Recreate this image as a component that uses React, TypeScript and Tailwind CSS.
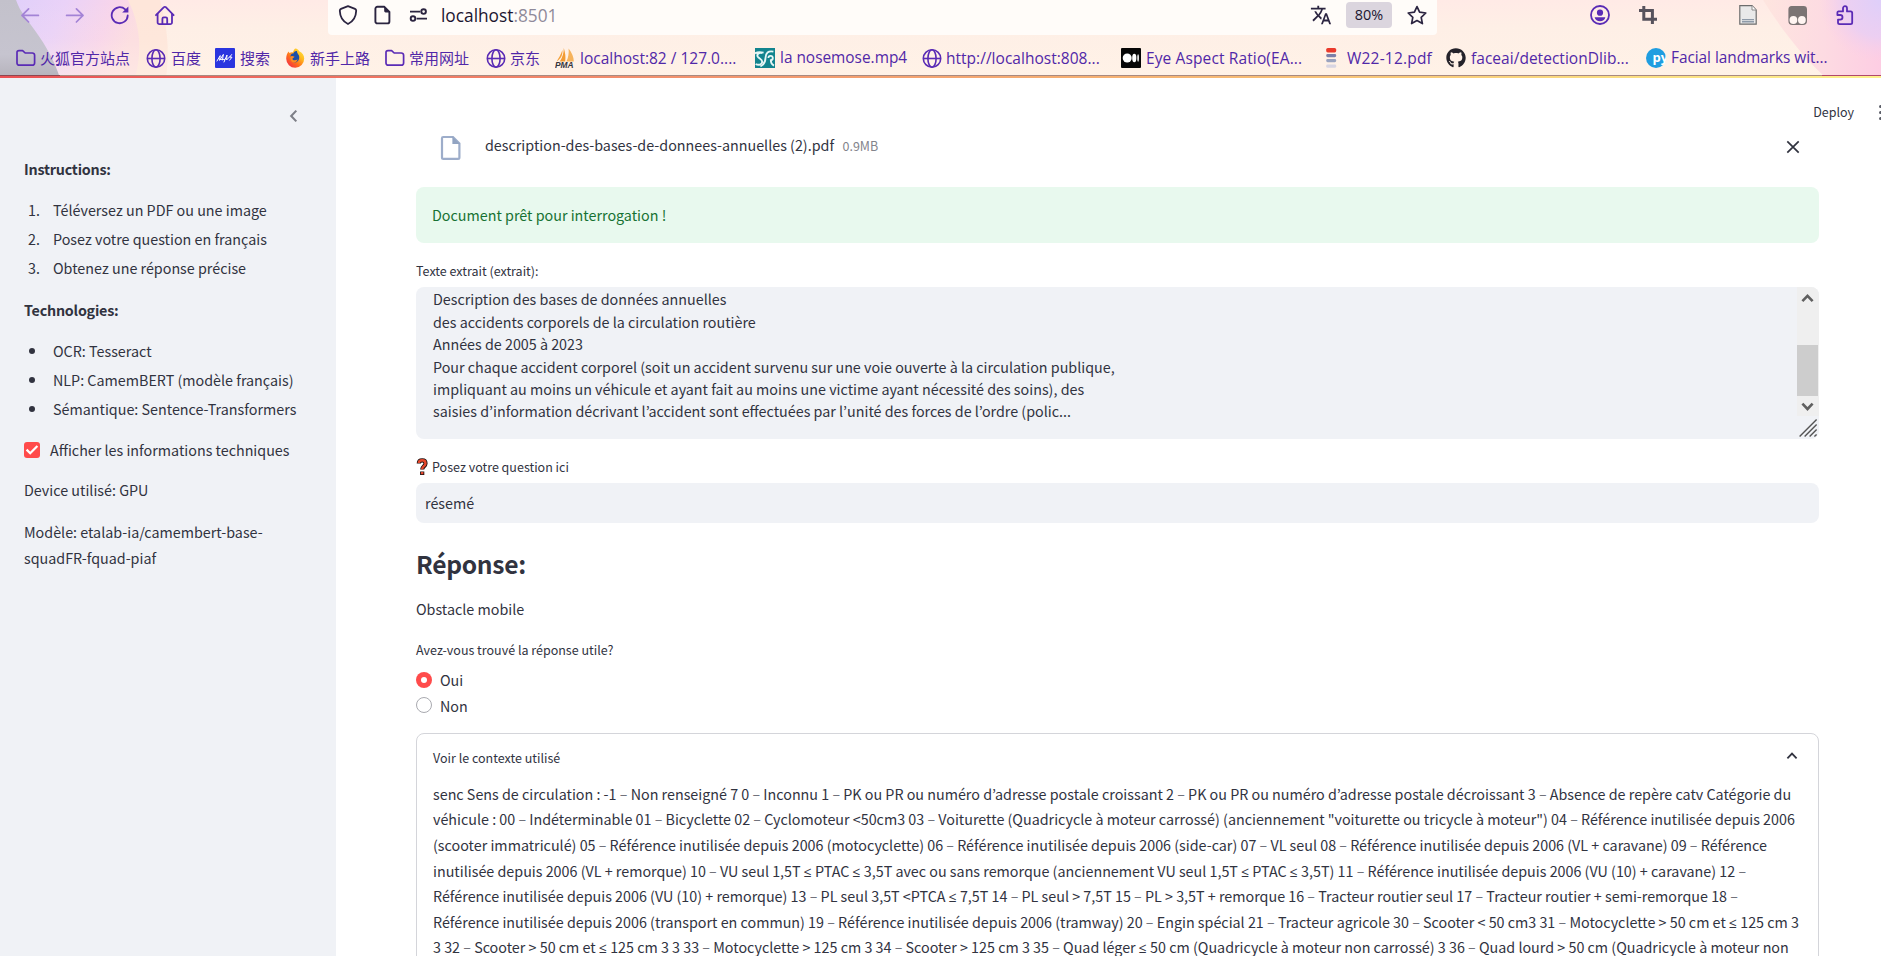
import React from "react";
import type { ReactNode } from "react";
import { FaGithub } from "react-icons/fa";
import { MdTranslate } from "react-icons/md";

const PURPLE = "#5a2bb5";
const INK = "#2b2440";

function ToolbarBackdrop() {
  return (
    <svg className="absolute inset-0" width="1881" height="78" viewBox="0 0 1881 78" aria-hidden="true">
      <defs>
        <linearGradient id="base" x1="0" y1="0" x2="0" y2="1">
          <stop offset="0" stopColor="#ffeae6" />
          <stop offset="0.35" stopColor="#feefe6" />
          <stop offset="1" stopColor="#fff2e7" />
        </linearGradient>
        <linearGradient id="lilac" x1="0" y1="0" x2="1" y2="0.25">
          <stop offset="0" stopColor="#decffa" />
          <stop offset="0.45" stopColor="#ead2f8" />
          <stop offset="0.8" stopColor="#f8d5ea" />
          <stop offset="1" stopColor="#fcdde0" />
        </linearGradient>
        <linearGradient id="fade" x1="0" y1="0" x2="0" y2="1">
          <stop offset="0" stopColor="#fff2e7" stopOpacity="0" />
          <stop offset="0.5" stopColor="#fff2e7" stopOpacity="0.08" />
          <stop offset="1" stopColor="#fff2e7" stopOpacity="0.5" />
        </linearGradient>
        <linearGradient id="slate" x1="0" y1="0" x2="0" y2="1">
          <stop offset="0" stopColor="#c3c1cb" />
          <stop offset="0.7" stopColor="#c6c4cf" />
          <stop offset="1" stopColor="#b5b2bb" />
        </linearGradient>
        <linearGradient id="rose" x1="0" y1="0" x2="1" y2="0">
          <stop offset="0" stopColor="#fee5df" />
          <stop offset="0.5" stopColor="#fddbe2" />
          <stop offset="1" stopColor="#fdcde3" />
        </linearGradient>
        <radialGradient id="violet" gradientUnits="userSpaceOnUse" cx="1881" cy="0" r="62">
          <stop offset="0" stopColor="#decffa" />
          <stop offset="0.6" stopColor="#e8cff5" stopOpacity="0.8" />
          <stop offset="1" stopColor="#f8cfea" stopOpacity="0" />
        </radialGradient>
        <linearGradient id="rule" x1="0" y1="0" x2="1" y2="0">
          <stop offset="0" stopColor="#ea5054" />
          <stop offset="0.15" stopColor="#ee6b5e" />
          <stop offset="0.35" stopColor="#f2906c" />
          <stop offset="0.65" stopColor="#f7b973" />
          <stop offset="0.85" stopColor="#fbdc80" />
          <stop offset="1" stopColor="#fdf08c" />
        </linearGradient>
      </defs>
      <rect width="1881" height="78" fill="url(#base)" />
      <path d="M0 0H160C167 26 170 50 166 78H0Z" fill="#fee6da" />
      <path d="M0 0H128C141 26 142 52 135 78H0Z" fill="url(#lilac)" />
      <rect width="170" height="78" fill="url(#fade)" />
      <path d="M0 0H16C20 12 28 20 36 32C46 46 54 60 60 78H0Z" fill="url(#slate)" />
      <path d="M1763 0H1881V78H1826C1802 56 1782 30 1763 0Z" fill="url(#rose)" />
      <rect x="1800" width="81" height="75" fill="url(#violet)" />
      <rect y="75" width="1881" height="1" fill="#a98a80" />
      <rect y="75" width="60" height="1" fill="#8e4650" />
      <rect x="1822" y="75" width="59" height="1" fill="#b0486c" />
      <rect y="76" width="1881" height="2" fill="url(#rule)" />
    </svg>
  );
}

function FolderIcon() {
  return (
    <svg width="20" height="20" viewBox="0 0 20 20" fill="none" stroke={PURPLE} strokeWidth="1.7" strokeLinejoin="round">
      <path d="M1 4.6A2 2 0 0 1 3 2.6H6.6L9.2 5H16.4A2.2 2.2 0 0 1 18.6 7.2V15A2.2 2.2 0 0 1 16.4 17.2H3.2A2.2 2.2 0 0 1 1 15Z" />
    </svg>
  );
}

function GlobeIcon() {
  return (
    <svg width="20" height="20" viewBox="0 0 20 20" fill="none" stroke={PURPLE} strokeWidth="1.6">
      <circle cx="10" cy="10.5" r="8.7" />
      <ellipse cx="10" cy="10.5" rx="4.1" ry="8.7" />
      <path d="M1.3 10.5H18.7" />
    </svg>
  );
}

function SearchSiteIcon() {
  return (
    <svg width="20" height="20" viewBox="0 0 20 20">
      <rect width="20" height="20" rx="1" fill="#2a35df" />
      <path d="M2 13L5.2 7.6L4.6 12.4L8.4 6.4L7.4 12M5 11.4H9.6M9 14L12 7L11.6 12L14.8 8.6M16.6 6.6L14.6 9.2H17L14.6 12.2" fill="none" stroke="#fff" strokeWidth="1" strokeLinecap="round" />
    </svg>
  );
}

function FirefoxIcon() {
  return (
    <svg width="20" height="20" viewBox="0 0 20 20">
      <defs>
        <linearGradient id="ff" x1="1" y1="0" x2="0.1" y2="1">
          <stop offset="0" stopColor="#fff04a" />
          <stop offset="0.35" stopColor="#ffbb1f" />
          <stop offset="0.65" stopColor="#ff6a1c" />
          <stop offset="1" stopColor="#f0254f" />
        </linearGradient>
      </defs>
      <path d="M10.2 0.6C12.4 0.8 13.6 2 14.2 3.2C17.4 4.6 19.2 7.2 19.2 10.6A9 9 0 0 1 1.2 10.8C1.2 7.6 2 5.4 3.6 3.4L4.4 5C5.8 4.2 7 4.2 8 4.4C8.4 2.8 9 1.6 10.2 0.6Z" fill="url(#ff)" />
      <path d="M5.4 8.2C6 5.8 7.4 5.4 8.4 5.6C9 3.6 11 2.8 12 3.2C11.8 4.6 13 5.6 13.8 7.2C15 9.8 13.8 14.2 10 14.4C7 14.4 5.2 12 5.4 8.2Z" fill="#1b4fa8" />
      <path d="M5.2 8.6C6.6 7.6 8 8 9.6 8.8C8.6 10.2 7.4 10 7.4 11C8 12.8 11 12.6 12.6 11.2C12 14 9.6 15.2 7.6 14.2C5.6 13.2 4.8 11 5.2 8.6Z" fill="#ff8a1e" />
    </svg>
  );
}

function PmaIcon() {
  return (
    <svg width="20" height="22" viewBox="0 0 20 22">
      <path d="M7.4 3C7.8 8 6 12 1.6 14.4C3.8 11 5.8 7.6 7.4 3Z" fill="#f5a13a" />
      <path d="M8.8 1C10.4 6 10.8 10.4 10.2 14.4H4.8C7.6 10.4 8.8 6 8.8 1Z" fill="#f29b33" />
      <path d="M13.6 1.4C17 5.8 18.8 10 18.8 14.4H11.4C13.4 10.4 14 6 13.6 1.4Z" fill="#f6b35c" />
      <text x="0" y="21" fontSize="8.4" fontWeight="700" fontStyle="italic" fontFamily="Liberation Sans" fill="#35353d">PMA</text>
    </svg>
  );
}

function WaveSiteIcon() {
  return (
    <svg width="20" height="20" viewBox="0 0 20 20">
      <rect width="20" height="20" fill="#12848e" />
      <path d="M0 5.4C2.4 3.6 5 4 8.6 4.6M7 5C3.4 4.4 1.8 6.4 2.6 8.4C3.6 10.6 7.4 11 7.2 14C7 16.8 3.4 17.4 0.6 16" fill="none" stroke="#e6f6f5" strokeWidth="1.9" />
      <path d="M18.4 3.6C13 2.4 10.8 5.4 10.6 9.4C10.4 14 8.6 17 5.4 18.4M13.4 10A2.2 2.2 0 1 1 15.8 12.2C15.8 15 17 16.6 19 17.6" fill="none" stroke="#e6f6f5" strokeWidth="1.8" />
    </svg>
  );
}

function MediumIcon() {
  return (
    <svg width="20" height="20" viewBox="0 0 20 20">
      <rect width="20" height="20" rx="1" fill="#060606" />
      <circle cx="6.2" cy="10" r="4.5" fill="#fff" />
      <ellipse cx="13.3" cy="10" rx="2.1" ry="4.2" fill="#fff" />
      <ellipse cx="17.1" cy="10" rx="0.8" ry="3.7" fill="#fff" />
    </svg>
  );
}

function StackIcon() {
  return (
    <svg width="11" height="20" viewBox="0 0 11 20">
      <rect x="0.2" y="0" width="10" height="4.4" rx="1.6" fill="#ea3a2c" />
      <rect x="0.2" y="6" width="10" height="3.2" rx="1.4" fill="#7b7fa8" />
      <rect x="0.2" y="11" width="10" height="3.2" rx="1.4" fill="#9aa3bf" />
      <rect x="0.2" y="16.4" width="10" height="3.4" rx="1.4" fill="#d8d5e2" />
    </svg>
  );
}

function PyIcon() {
  return (
    <svg width="20" height="20" viewBox="0 0 20 20">
      <circle cx="10" cy="10" r="10" fill="#1f9de0" />
      <text x="6.6" y="14.2" fontSize="13" fontWeight="700" fontFamily="Open Sans" fill="#fff">py</text>
    </svg>
  );
}

type Bookmark = { icon: ReactNode; label: string; slot: string; gap: string; text: string };

const bookmarks: Bookmark[] = [
  { icon: <FolderIcon />, label: "火狐官方站点", slot: "w-[130px]", gap: "gap-[4px]", text: "text-[15px]" },
  { icon: <GlobeIcon />, label: "百度", slot: "w-[69px]", gap: "gap-[5px]", text: "text-[15px]" },
  { icon: <SearchSiteIcon />, label: "搜索", slot: "w-[70px]", gap: "gap-[5px]", text: "text-[15px]" },
  { icon: <FirefoxIcon />, label: "新手上路", slot: "w-[100px]", gap: "gap-[5px]", text: "text-[15px]" },
  { icon: <FolderIcon />, label: "常用网址", slot: "w-[101px]", gap: "gap-[4px]", text: "text-[15px]" },
  { icon: <GlobeIcon />, label: "京东", slot: "w-[69px]", gap: "gap-[4px]", text: "text-[15px]" },
  { icon: <PmaIcon />, label: "localhost:82 / 127.0....", slot: "w-[200px]", gap: "gap-[5px]", text: "text-[15.5px]" },
  { icon: <WaveSiteIcon />, label: "la nosemose.mp4", slot: "w-[167px]", gap: "gap-[5px]", text: "text-[15.4px]" },
  { icon: <GlobeIcon />, label: "http://localhost:808...", slot: "w-[199px]", gap: "gap-[4px]", text: "text-[15.5px] tracking-[0.02px]" },
  { icon: <MediumIcon />, label: "Eye Aspect Ratio(EA...", slot: "w-[205px]", gap: "gap-[5px]", text: "text-[15.5px] tracking-[0.12px]" },
  { icon: <StackIcon />, label: "W22-12.pdf", slot: "w-[120px]", gap: "gap-[10px]", text: "text-[15.5px] tracking-[0.2px]" },
  { icon: <FaGithub size={20} color="#24222a" />, label: "faceai/detectionDlib...", slot: "w-[200px]", gap: "gap-[5px]", text: "text-[15.5px] tracking-[0.03px]" },
  { icon: <PyIcon />, label: "Facial landmarks wit...", slot: "w-[190px]", gap: "gap-[5px]", text: "text-[15.4px] tracking-[-0.04px]" },
];

function BrowserChrome() {
  return (
    <header className="relative h-[78px] shrink-0 overflow-hidden font-['Open_Sans','Noto_Sans_CJK_SC',sans-serif]">
      <ToolbarBackdrop />
      <div className="relative flex h-[35px]">
        <div className="flex w-[328px] items-start pl-[20px]">
          <svg className="mt-[5px]" width="20" height="20" viewBox="0 0 20 20" fill="none" stroke="#a383d6" strokeWidth="1.7" strokeLinecap="round" strokeLinejoin="round">
            <path d="M18.4 10.4H2M8.6 3.8L2 10.4L8.6 17" />
          </svg>
          <svg className="ml-[25px] mt-[5px]" width="20" height="20" viewBox="0 0 20 20" fill="none" stroke="#a383d6" strokeWidth="1.7" strokeLinecap="round" strokeLinejoin="round">
            <path d="M1.6 10.4H18M11.4 3.8L18 10.4L11.4 17" />
          </svg>
          <svg className="ml-[25px] mt-[5px]" width="20" height="20" viewBox="0 0 20 20" fill="none" stroke={PURPLE} strokeWidth="1.8" strokeLinecap="round">
            <path d="M17.7 10.4A8 8 0 1 1 15.2 4.4" />
            <path d="M18.4 1.4V7.6H12.2Z" fill={PURPLE} stroke="none" />
          </svg>
          <svg className="ml-[25px] mt-[5px]" width="20" height="21" viewBox="0 0 20 21" fill="none" stroke={PURPLE} strokeWidth="1.8" strokeLinejoin="round" strokeLinecap="round">
            <path d="M1 10.2L8.9 2.2A1.3 1.3 0 0 1 10.8 2.2L18.6 10.2" />
            <path d="M2.6 8.8V17.4A1.8 1.8 0 0 0 4.4 19.2H15.2A1.8 1.8 0 0 0 17 17.4V8.8" />
            <path d="M7.4 19V13.8A1.4 1.4 0 0 1 8.8 12.4H10.8A1.4 1.4 0 0 1 12.2 13.8V19" />
          </svg>
        </div>
        <div className="flex w-[1109px] items-start rounded-b-[4px] bg-[#fffcf9] pl-[10px]">
          <svg className="mt-[5px]" width="20" height="20" viewBox="0 0 20 20" fill="none" stroke={INK} strokeWidth="1.8" strokeLinejoin="round">
            <path d="M10 1.2L17 3.8C18 4.2 18.2 4.8 18.2 5.8C18 12 15.6 16.4 10 19C4.4 16.4 2 12 1.8 5.8C1.8 4.8 2 4.2 3 3.8Z" />
          </svg>
          <svg className="ml-[16px] mt-[5px]" width="18" height="20" viewBox="0 0 18 20" fill="none" stroke={INK} strokeWidth="1.9" strokeLinejoin="round">
            <path d="M3.4 1.8H10.4L15.4 6.8V16.4A2 2 0 0 1 13.4 18.4H3.4A2 2 0 0 1 1.4 16.4V3.8A2 2 0 0 1 3.4 1.8Z" />
            <path d="M10.2 1.6L15.8 7.4H11.6A1.4 1.4 0 0 1 10.2 6Z" fill={INK} stroke="none" />
          </svg>
          <svg className="ml-[17px] mt-[5px]" width="20" height="20" viewBox="0 0 20 20" fill="none" stroke={INK} strokeWidth="1.9">
            <path d="M1 6.6H11.2M7.6 13.6H18" />
            <circle cx="14.6" cy="6.6" r="2.3" />
            <circle cx="4" cy="13.6" r="2.3" />
          </svg>
          <span className="ml-[12px] mt-[3px] w-[860px] text-[17.3px] leading-[26px] text-[#1c1630]">
            localhost<span className="text-[#8f8a9a]">:8501</span>
          </span>
          <MdTranslate className="ml-[9px] mt-[4px]" size={22} color={INK} />
          <span className="ml-[14px] mt-[2px] flex h-[26px] w-[46px] items-center justify-center rounded-[4px] bg-[#dbd5de] text-[14.4px] text-[#1c1630]">80%</span>
          <svg className="ml-[15px] mt-[5px]" width="20" height="21" viewBox="0 0 20 21" fill="none" stroke={INK} strokeWidth="1.7" strokeLinejoin="round">
            <path d="M10 1.6L12.6 7.2L18.8 8L14.2 12.3L15.4 18.6L10 15.5L4.6 18.6L5.8 12.3L1.2 8L7.4 7.2Z" />
          </svg>
        </div>
        <div className="flex items-start pl-[153px]">
          <svg className="mt-[5px]" width="20" height="20" viewBox="0 0 20 20">
            <circle cx="10" cy="10" r="9" fill="none" stroke={PURPLE} strokeWidth="1.8" />
            <circle cx="10" cy="7.7" r="3.1" fill={PURPLE} />
            <path d="M4.6 12.2H15.4C14.8 14.8 12.6 16.2 10 16.2C7.4 16.2 5.2 14.8 4.6 12.2Z" fill={PURPLE} />
          </svg>
          <svg className="ml-[29px] mt-[6px]" width="18" height="18" viewBox="0 0 18 18" fill="none" stroke="#56525c" strokeWidth="3">
            <path d="M4.8 0V13.2H18M0 4.6H13.4V18" />
          </svg>
          <svg className="ml-[82px] mt-[5px]" width="18" height="20" viewBox="0 0 18 20">
            <path d="M0.8 0.6H13L17.2 5V19.2H0.8Z" fill="#e9e9e9" stroke="#6d6d6d" strokeWidth="1.2" />
            <path d="M13 0.8V5H17" fill="#fff" stroke="#8a8a8a" />
            <path d="M3 14.6H15M3 16.8H15" stroke="#8e9aa8" strokeWidth="1.4" />
          </svg>
          <svg className="ml-[31px] mt-[5px]" width="20" height="21" viewBox="0 0 20 21">
            <path d="M3.6 1H15.6A3.4 3.4 0 0 1 19 4.4V16A4 4 0 0 1 15 20H4.4A4 4 0 0 1 0.4 16V4.4A3.4 3.4 0 0 1 3.6 1Z" fill="#7b7474" />
            <circle cx="5.4" cy="15" r="3.9" fill="#fff5f2" />
            <circle cx="13.9" cy="15" r="3.9" fill="#fff5f2" />
          </svg>
          <svg className="ml-[28px] mt-[5px]" width="20" height="21" viewBox="0 0 20 21" fill="none" stroke={PURPLE} strokeWidth="1.8" strokeLinejoin="round">
            <path d="M2.4 6.4H7V3.2A2 2 0 0 1 11 3.2V6.4H14.6A1.6 1.6 0 0 1 16.2 8V17.6A1.6 1.6 0 0 1 14.6 19.2H3.6A1.6 1.6 0 0 1 2 17.6V14.6H4.2A2.2 2.2 0 0 0 4.2 10H1.4V7.6A1.2 1.2 0 0 1 2.4 6.4Z" />
          </svg>
        </div>
      </div>
      <nav className="relative flex h-[40px] items-center pl-[16px] pt-[6px] leading-[24px] text-[#5128a8]">
        {bookmarks.map((b) => (
          <div key={b.label} className={`flex shrink-0 items-center whitespace-nowrap ${b.slot} ${b.gap}`}>
            <span className="shrink-0">{b.icon}</span>
            <span className={b.text}>{b.label}</span>
          </div>
        ))}
      </nav>
    </header>
  );
}

function Sidebar() {
  return (
    <aside className="h-full w-[336px] shrink-0 bg-[#f0f2f6] pl-[24px] leading-[26px]">
      <div className="flex h-[78px] items-center pl-[264px]">
        <svg className="mb-[2px]" width="12" height="14" viewBox="0 0 12 14" fill="none" stroke="#7d7f87" strokeWidth="2.1">
          <path d="M8.3 1.6L3.2 7L8.3 12.4" />
        </svg>
      </div>
      <p className="font-bold tracking-[-0.22px]">Instructions:</p>
      <ol className="mt-[13px] leading-[29px]">
        {["Téléversez un PDF ou une image", "Posez votre question en français", "Obtenez une réponse précise"].map((t, i) => (
          <li key={t} className="flex">
            <span className="w-[29px] pl-[4px]">{i + 1}.</span>
            {t}
          </li>
        ))}
      </ol>
      <p className="mt-[15px] font-bold tracking-[-0.22px]">Technologies:</p>
      <ul className="mt-[13px] leading-[29px]">
        {["OCR: Tesseract", "NLP: CamemBERT (modèle français)", "Sémantique: Sentence-Transformers"].map((t) => (
          <li key={t} className="flex items-center">
            <span className="ml-[5px] mr-[18px] size-[6px] rounded-full bg-[#31333f]" />
            {t}
          </li>
        ))}
      </ul>
      <label className="mt-[14px] flex items-center gap-[10px]">
        <span className="flex size-[16px] items-center justify-center rounded-[3px] bg-[#ff4b4b]">
          <svg width="14" height="12" viewBox="0 0 14 12" fill="none" stroke="#fff" strokeWidth="2.3">
            <path d="M1.6 5.6L5.2 9.2L12.4 2" />
          </svg>
        </span>
        Afficher les informations techniques
      </label>
      <p className="mt-[14px]">Device utilisé: GPU</p>
      <p className="mt-[16px]">
        Modèle: etalab-ia/camembert-base-
        <br />
        squadFR-fquad-piaf
      </p>
    </aside>
  );
}

const extract = [
  "Description des bases de données annuelles",
  "des accidents corporels de la circulation routière",
  "Années de 2005 à 2023",
  "Pour chaque accident corporel (soit un accident survenu sur une voie ouverte à la circulation publique,",
  "impliquant au moins un véhicule et ayant fait au moins une victime ayant nécessité des soins), des",
  "saisies d’information décrivant l’accident sont effectuées par l’unité des forces de l’ordre (polic...",
];

const context = [
  "senc Sens de circulation : -1 – Non renseigné 7 0 – Inconnu 1 – PK ou PR ou numéro d’adresse postale croissant 2 – PK ou PR ou numéro d’adresse postale décroissant 3 – Absence de repère catv Catégorie du",
  'véhicule : 00 – Indéterminable 01 – Bicyclette 02 – Cyclomoteur <50cm3 03 – Voiturette (Quadricycle à moteur carrossé) (anciennement "voiturette ou tricycle à moteur") 04 – Référence inutilisée depuis 2006',
  "(scooter immatriculé) 05 – Référence inutilisée depuis 2006 (motocyclette) 06 – Référence inutilisée depuis 2006 (side-car) 07 – VL seul 08 – Référence inutilisée depuis 2006 (VL + caravane) 09 – Référence",
  "inutilisée depuis 2006 (VL + remorque) 10 – VU seul 1,5T ≤ PTAC ≤ 3,5T avec ou sans remorque (anciennement VU seul 1,5T ≤ PTAC ≤ 3,5T) 11 – Référence inutilisée depuis 2006 (VU (10) + caravane) 12 –",
  "Référence inutilisée depuis 2006 (VU (10) + remorque) 13 – PL seul 3,5T <PTCA ≤ 7,5T 14 – PL seul > 7,5T 15 – PL > 3,5T + remorque 16 – Tracteur routier seul 17 – Tracteur routier + semi-remorque 18 –",
  "Référence inutilisée depuis 2006 (transport en commun) 19 – Référence inutilisée depuis 2006 (tramway) 20 – Engin spécial 21 – Tracteur agricole 30 – Scooter < 50 cm3 31 – Motocyclette > 50 cm et ≤ 125 cm 3",
  "3 32 – Scooter > 50 cm et ≤ 125 cm 3 3 33 – Motocyclette > 125 cm 3 34 – Scooter > 125 cm 3 35 – Quad léger ≤ 50 cm (Quadricycle à moteur non carrossé) 3 36 – Quad lourd > 50 cm (Quadricycle à moteur non",
];

function ContextLine({ text }: { text: string }) {
  return (
    <p className="h-[25.6px] whitespace-nowrap">
      {text.split(/([≤–])/).map((part, i) =>
        part === "≤" ? (
          <span key={i} className="font-['Open_Sans'] text-[14px] leading-none">≤</span>
        ) : part === "–" ? (
          <span key={i} className="text-[#31333f]/75">–</span>
        ) : (
          part
        ),
      )}
    </p>
  );
}

function ExtractBox() {
  return (
    <div className="flex h-[152px] justify-between overflow-hidden rounded-[8px] bg-[#f0f2f6] pl-[17px]">
      <div className="whitespace-nowrap pt-[1.4px] leading-[22.4px]">
        {extract.map((line) => (
          <p key={line}>{line}</p>
        ))}
      </div>
      <div className="flex w-[22px] flex-col">
        <div className="flex h-[129px] flex-col items-center bg-[#efefef] pr-px">
          <svg className="mt-[6px]" width="13" height="10" viewBox="0 0 13 10" fill="none" stroke="#606060" strokeWidth="2.6">
            <path d="M1.4 8.2L6.5 2.8L11.6 8.2" />
          </svg>
          <span className="mt-[42px] h-[51px] w-[21px] shrink-0 bg-[#cdcdcd]" />
          <svg className="mt-[6px]" width="13" height="10" viewBox="0 0 13 10" fill="none" stroke="#606060" strokeWidth="2.6">
            <path d="M1.4 1.6L6.5 7L11.6 1.6" />
          </svg>
        </div>
        <svg className="ml-[2px] mt-[2px]" width="19" height="20" viewBox="0 0 19 20" fill="none" stroke="#555" strokeWidth="1.4">
          <path d="M0.6 18.6L17.6 1.4M5.6 18.6L17.6 6.6M10.6 18.6L17.6 11.6M15.4 18.6L17.6 16.4" />
        </svg>
      </div>
    </div>
  );
}

function Radio({ label, checked }: { label: string; checked?: boolean }) {
  return (
    <label className="flex h-[26px] items-center gap-[8px]">
      {checked ? (
        <span className="flex size-[16px] items-center justify-center rounded-full bg-[#ff4b4b]">
          <span className="size-[6px] rounded-full bg-white" />
        </span>
      ) : (
        <span className="mb-[2px] size-[16px] rounded-full border border-[#a9aab0] bg-white" />
      )}
      {label}
    </label>
  );
}

function Main() {
  return (
    <main className="flex h-full w-[1545px] flex-col overflow-hidden bg-white">
      <div className="mt-[24px] flex h-[20px] shrink-0 items-center justify-end text-[12.5px] leading-[20px]">
        <span>Deploy</span>
        <span className="ml-[25px] flex w-[2px] flex-col gap-[3px] overflow-hidden">
          <span className="size-[3px] rounded-full bg-[#5c5e68]" />
          <span className="size-[3px] rounded-full bg-[#5c5e68]" />
          <span className="size-[3px] rounded-full bg-[#5c5e68]" />
        </span>
      </div>
      <div className="flex w-[1483px] flex-col pl-[80px]">
        <div className="flex h-[65px] items-start pl-[24px]">
          <svg className="mt-[13px]" width="22" height="26" viewBox="0 0 22 26" fill="none" stroke="#9dadca" strokeWidth="2.2">
            <path d="M3.2 2H13L19.4 8.4V22.4A1.4 1.4 0 0 1 18 23.8H3.4A1.4 1.4 0 0 1 2 22.4V3.2A1.2 1.2 0 0 1 3.2 2Z" />
            <path d="M12.4 1.4V9H20Z" fill="#92a4c2" stroke="none" />
          </svg>
          <span className="ml-[23px] mt-[10px] w-[357.5px] leading-[26px]">description-des-bases-de-donnees-annuelles (2).pdf</span>
          <span className="mt-[10px] text-[12.5px] leading-[27px] text-[#83848c]">0.9MB</span>
          <svg className="ml-auto mr-[19px] mt-[18px]" width="14" height="14" viewBox="0 0 14 14" fill="none" stroke="#31333f" strokeWidth="1.7">
            <path d="M1.3 1.3L12.7 12.7M12.7 1.3L1.3 12.7" />
          </svg>
        </div>
        <div className="flex h-[56px] items-center rounded-[8px] bg-[#e8f9ee] pl-[16px] text-[#177233]">Document prêt pour interrogation !</div>
        <p className="mb-[6px] mt-[18px] text-[12.5px] leading-[20px]">Texte extrait (extrait):</p>
        <ExtractBox />
        <p className="mb-[6px] mt-[18px] flex items-center text-[12.5px] leading-[20px]">
          <svg className="mr-[4px]" width="12" height="18" viewBox="0 0 12 18" fill="none">
            <path d="M2.8 5.4C2.8 3.2 4.4 2.3 6.2 2.3C8.4 2.3 9.5 3.6 9.5 5.4C9.5 8.2 6.2 8.2 6.2 11.6M6.2 13.4V17" stroke="#1d1010" strokeWidth="4.2" />
            <path d="M2.8 5C2.8 3.2 4.4 2.3 6.2 2.3C8.4 2.3 9.5 3.6 9.5 5.4C9.5 8.2 6.2 8.2 6.2 11.2M6.2 14V16.2" stroke="#e5482c" strokeWidth="2.4" />
          </svg>
          Posez votre question ici
        </p>
        <div className="flex h-[40px] items-center rounded-[8px] bg-[#f0f2f6] pl-[9px]">résemé</div>
        <h2 className="mt-[22px] text-[24.6px] font-bold leading-[36px] tracking-[-0.3px]">Réponse:</h2>
        <p className="mt-[15px] leading-[26px]">Obstacle mobile</p>
        <p className="mt-[18px] text-[12.5px] leading-[20px]">Avez-vous trouvé la réponse utile?</p>
        <div className="mt-[7px]">
          <Radio label="Oui" checked />
          <Radio label="Non" />
        </div>
        <section className="mt-[14px] h-[300px] rounded-[8px] border border-[#d4d5da] pl-[16px]">
          <div className="mt-[14px] flex items-start justify-between pr-[20px] text-[12.5px] leading-[20px]">
            Voir le contexte utilisé
            <svg className="mt-[3px]" width="12" height="10" viewBox="0 0 12 10" fill="none" stroke="#31333f" strokeWidth="1.8">
              <path d="M1.4 7.4L6 2.6L10.6 7.4" />
            </svg>
          </div>
          <div className="mt-[12.9px] leading-[25.6px]">
            {context.map((line) => (
              <ContextLine key={line} text={line} />
            ))}
          </div>
        </section>
      </div>
    </main>
  );
}

export default function App() {
  return (
    <div className="flex h-[956px] w-[1881px] flex-col overflow-hidden bg-white">
      <BrowserChrome />
      <div className="flex min-h-0 flex-1 font-['Noto_Sans_CJK_KR',sans-serif] text-[14.325px] text-[#31333f]">
        <Sidebar />
        <Main />
      </div>
    </div>
  );
}
